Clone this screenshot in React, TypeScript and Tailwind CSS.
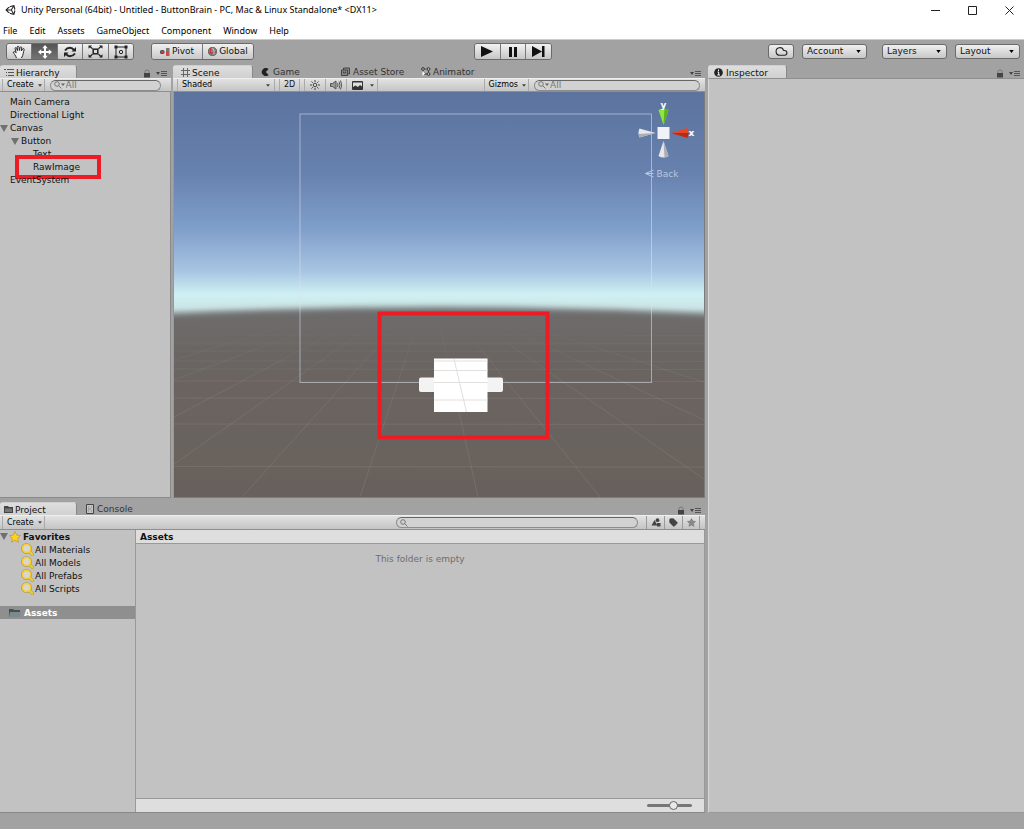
import React from 'react';
import { Cloud, Tag } from 'lucide-react';
import { FaUnity } from 'react-icons/fa';

const MENUS = ['File', 'Edit', 'Assets', 'GameObject', 'Component', 'Window', 'Help'];
const FAVORITES = ['All Materials', 'All Models', 'All Prefabs', 'All Scripts'];

function Caret({ className = 'h-[3px] w-[5px] text-[#444]' }: { className?: string }) {
  return (
    <svg viewBox="0 0 6 4" className={`shrink-0 ${className}`} fill="currentColor">
      <path d="M0 0H6L3 4Z" />
    </svg>
  );
}

function StarShape({ className, fill, stroke }: { className: string; fill: string; stroke: string }) {
  return (
    <svg viewBox="0 0 12 12" className={`shrink-0 ${className}`} fill={fill} stroke={stroke} strokeWidth=".7" strokeLinejoin="round">
      <path d="M6 .6L7.700 4.100L11.500 4.600L8.700 7.300L9.400 11.200L6 9.300L2.600 11.200L3.300 7.300L.5 4.600L4.300 4.100Z" />
    </svg>
  );
}

function PaneMenu({ lock = true }: { lock?: boolean }) {
  return (
    <div className="ml-auto flex items-center gap-[5px] pr-[3px] pt-1 text-[#444]">
      {lock && (
        <button aria-label="Lock pane">
          <svg viewBox="0 0 8 9" className="h-[9px] w-2">
            <path d="M2 4V2.500Q2 1 4 1T6 2.500V4" fill="none" stroke="#777" />
            <rect x="1" y="4" width="6" height="4.500" fill="#444" />
          </svg>
        </button>
      )}
      <button aria-label="Pane options">
        <svg viewBox="0 0 12 7" className="h-[7px] w-3">
          <path d="M0 2H4L2 5Z" fill="#444" />
          <path d="M5 1.500H11M5 3.500H11M5 5.500H11" stroke="#555" />
        </svg>
      </button>
    </div>
  );
}

function Tab({ label, icon, active, className = '' }: { label: string; icon: React.ReactNode; active?: boolean; className?: string }) {
  return (
    <button
      className={`flex h-[13px] items-center gap-0.5 whitespace-nowrap text-[9px] leading-[13px] ${
        active ? 'rounded-t-[3px] border-t border-r border-[#cfcfcf] border-r-[#888] bg-[#d2d2d2] bg-linear-to-b from-[#dedede] to-[#d0d0d0] text-[#111]' : 'text-[#333]'
      } ${className}`}
    >
      {icon}
      <span className="pt-0.5">{label}</span>
    </button>
  );
}

function ToolButton({ label, active, children }: { label: string; active?: boolean; children: React.ReactNode }) {
  return (
    <button
      aria-label={label}
      className={`flex h-full flex-1 items-center justify-center border-r border-[#777] last:border-r-0 ${
        active ? 'bg-linear-to-b from-[#555] to-[#737373]' : 'bg-linear-to-b from-[#f2f2f2] to-[#c6c6c6]'
      }`}
    >
      {children}
    </button>
  );
}

const groupClass = 'flex h-[17px] overflow-hidden rounded-[3px] border border-[#6a6a6a]';

function DropDown({ label }: { label: string }) {
  return (
    <label className="relative flex items-center">
      <select
        aria-label={label}
        className="h-[15px] w-[65px] appearance-none rounded-[3px] border border-[#6a6a6a] bg-linear-to-b from-[#f0f0f0] to-[#c8c8c8] pl-1 text-[9px] leading-[13px] text-[#111]"
      >
        <option>{label}</option>
      </select>
      <span className="pointer-events-none absolute right-1.5">
        <Caret className="h-[3px] w-[5px] text-black" />
      </span>
    </label>
  );
}

function Search({ label, value, className }: { label: string; value?: string; className: string }) {
  return (
    <div className={`flex h-[11px] items-center overflow-hidden rounded-full border border-[#8c8c8c] border-t-[#666] bg-[#d2d2d2] pl-[3px] ${className}`}>
      <svg viewBox="0 0 12 8" className="h-2 w-3 shrink-0" fill="none" stroke="#777">
        <circle cx="3" cy="3" r="2.300" />
        <path d="M4.700 4.700L7.500 7.500" />
        {value && <path d="M7 2.500H11L9 5Z" fill="#666" stroke="none" />}
      </svg>
      <input aria-label={label} placeholder={value} className="h-[9px] w-full min-w-0 bg-transparent text-[9px] leading-[9px] outline-none placeholder:text-[#777]" />
    </div>
  );
}

function CreateButton() {
  return (
    <button className="ml-0.5 flex h-full items-center gap-1 border-x border-[#aaa] pr-0.5 pl-1 text-[8px] text-black">
      Create
      <Caret className="h-[3px] w-1 text-[#444]" />
    </button>
  );
}

const paneBar = 'flex shrink-0 items-center border-y border-t-[#efefef] border-b-[#8f8f8f] bg-linear-to-b from-[#e2e2e2] to-[#c4c4c4]';

function Foldout() {
  return (
    <svg viewBox="0 0 8 7" className="h-[7px] w-2 shrink-0">
      <path d="M0 0H8L4 7Z" fill="#707070" />
    </svg>
  );
}

function MainToolbar() {
  return (
    <div className="grid h-[26px] shrink-0 grid-cols-[1fr_auto_1fr] items-center border-t border-[#ccc] bg-[#a2a2a2] pr-1 pb-0.5 pl-1.5 text-[9px]">
      <div className="flex items-center gap-[17px]">
        <div className={`${groupClass} w-32`}>
          <ToolButton label="Hand">
            <svg viewBox="0 0 16 16" className="h-3.5 w-3.5" fill="#f4f4f4" stroke="#222" strokeWidth="1.100" strokeLinejoin="round" strokeLinecap="round">
              <path d="M5 14.500C4.500 12 1.500 9.500 1.500 8.200C2 7 3.500 7.500 4.800 9L3.500 4.200C3.300 2.800 5 2.500 5.400 3.800L6.200 6.500L6 2.500C6 1 7.800 1 8 2.500L8.400 6.300L9.300 2.800C9.800 1.500 11.300 2 11.100 3.400L10.600 6.800L12.300 4.500C13.200 3.500 14.300 4.300 13.800 5.500C13 8 13 11.500 11 14.500" />
            </svg>
          </ToolButton>
          <ToolButton label="Move" active>
            <svg viewBox="0 0 14 14" className="h-3.5 w-3.5" fill="#fff">
              <path d="M7 0L9.700 3.200H8V6H10.800V4.300L14 7L10.800 9.700V8H8V10.800H9.700L7 14L4.300 10.800H6V8H3.200V9.700L0 7L3.200 4.300V6H6V3.200H4.300Z" />
            </svg>
          </ToolButton>
          <ToolButton label="Rotate">
            <svg viewBox="0 0 14 12" className="h-3 w-3.5" fill="none" stroke="#222" strokeWidth="1.900">
              <path d="M2 4.500Q4 1.800 7 1.800Q9.500 1.800 11 4M12 7.500Q10 10.200 7 10.200Q4.500 10.200 3 8" />
              <path d="M13 1V5.500H8.500ZM1 11V6.500H5.500Z" fill="#222" stroke="none" />
            </svg>
          </ToolButton>
          <ToolButton label="Scale">
            <svg viewBox="0 0 15 13" className="h-[13px] w-[15px]" fill="none" stroke="#222" strokeWidth="1.500">
              <rect x="5.200" y="4.200" width="4.600" height="4.600" />
              <path d="M2 1.500L4.500 3.700M13 1.500L10.500 3.700M2 11.500L4.500 9.300M13 11.500L10.500 9.300" strokeWidth="1.200" />
              <path d="M.5 .5H4L.5 3.800ZM14.500 .5V3.800L11 .5ZM.5 12.500V9.200L4 12.500ZM14.500 12.500H11L14.500 9.200Z" fill="#222" stroke="none" />
            </svg>
          </ToolButton>
          <ToolButton label="Rect">
            <svg viewBox="0 0 14 14" className="h-3.5 w-3.5" fill="none" stroke="#222">
              <path d="M2 2H12V12H2Z" />
              <circle cx="7" cy="7" r="1.700" />
              <path d="M.5 .5H3.500V3.500H.5ZM10.500 .5H13.500V3.500H10.500ZM.5 10.500H3.500V13.500H.5ZM10.500 10.500H13.500V13.500H10.500Z" fill="#222" stroke="none" />
            </svg>
          </ToolButton>
        </div>
        <div className={`${groupClass} h-[15px] w-[103px]`}>
          <button className="flex flex-1 items-center justify-center gap-0.5 border-r border-[#777] bg-linear-to-b from-[#f0f0f0] to-[#c8c8c8]">
            <svg viewBox="0 0 10 8" className="h-2 w-2.5">
              <rect x="0" y="2" width="4.500" height="4" rx="1.500" fill="#555" />
              <rect x="1.500" y="3" width="2" height="2" fill="#e33" />
              <rect x="6" y="0" width="3.500" height="8" fill="#777" />
              <rect x="6" y="3" width="2.500" height="4" fill="#e04040" />
            </svg>
            Pivot
          </button>
          <button className="flex flex-1 items-center justify-center gap-0.5 bg-linear-to-b from-[#f0f0f0] to-[#c8c8c8]">
            <svg viewBox="0 0 10 10" className="h-[9px] w-[9px] shrink-0">
              <circle cx="5" cy="5" r="4.500" fill="#888" stroke="#555" />
              <path d="M3 1Q2 5 4 8M1 6Q5 8 9 5" stroke="#c33" fill="none" strokeWidth="1.300" />
              <path d="M5 1Q8 4 6.500 8" stroke="#ccc" fill="none" />
            </svg>
            Global
          </button>
        </div>
      </div>
      <div className={`${groupClass} w-[78px]`}>
        <ToolButton label="Play">
          <svg viewBox="0 0 12 11" className="h-[11px] w-3"><path d="M0 0L12 5.500L0 11Z" fill="#111" /></svg>
        </ToolButton>
        <ToolButton label="Pause">
          <svg viewBox="0 0 8 10" className="h-2.5 w-2"><path d="M0 0H3V10H0ZM5 0H8V10H5Z" fill="#111" /></svg>
        </ToolButton>
        <ToolButton label="Step">
          <svg viewBox="0 0 13 11" className="h-[11px] w-[13px]"><path d="M0 0L10 5.500L0 11ZM10 0H12.500V11H10Z" fill="#111" /></svg>
        </ToolButton>
      </div>
      <div className="flex justify-end gap-[15px]">
        <div className="flex gap-2">
          <button aria-label="Cloud services" className="flex h-[15px] w-[26px] items-center justify-center rounded-[3px] border border-[#6a6a6a] bg-linear-to-b from-[#f0f0f0] to-[#c8c8c8]">
            <Cloud className="h-[13px] w-[13px]" color="#222" />
          </button>
          <DropDown label="Account" />
        </div>
        <div className="flex gap-2">
          <DropDown label="Layers" />
          <DropDown label="Layout" />
        </div>
      </div>
    </div>
  );
}

function TreeRow({ label, indent, open, marked }: { label: string; indent: string; open?: boolean; marked?: boolean }) {
  return (
    <li className={`relative flex h-[13px] items-center ${indent}`}>
      <span className="flex w-[10px] shrink-0">{open && <Foldout />}</span>
      {label}
      {marked && <span className="absolute -top-1.5 left-[15px] h-6 w-[86px] border-4 border-[#ed1c24]" />}
    </li>
  );
}

function Hierarchy() {
  return (
    <section className="flex w-[171px] shrink-0 flex-col">
      <div className="flex h-[13px]">
        <Tab
          active
          label="Hierarchy"
          className="w-[77px] pl-1"
          icon={
            <svg viewBox="0 0 10 8" className="h-2 w-2.5" stroke="#555" fill="none">
              <path d="M0 1.500H2M3 1.500H10M2 4.500H3M4 4.500H10M2 7.500H3M4 7.500H10" />
            </svg>
          }
        />
        <PaneMenu />
      </div>
      <div className={`${paneBar} h-[14px]`}>
        <CreateButton />
        <Search label="Search hierarchy" value="All" className="mr-2.5 ml-[5px] flex-1" />
      </div>
      <ul className="flex-1 border-r border-b border-[#8a8a8a] bg-[#c2c2c2] pt-1 text-[9px] leading-[13px] text-[#111]">
        <TreeRow label="Main Camera" indent="pl-0" />
        <TreeRow label="Directional Light" indent="pl-0" />
        <TreeRow label="Canvas" indent="pl-0" open />
        <TreeRow label="Button" indent="pl-[11px]" open />
        <TreeRow label="Text" indent="pl-[23px]" />
        <TreeRow label="RawImage" indent="pl-[23px]" marked />
        <TreeRow label="EventSystem" indent="pl-0" />
      </ul>
    </section>
  );
}

function Viewport() {
  return (
    <svg viewBox="0 0 530 405" preserveAspectRatio="xMidYMid slice" className="absolute inset-0 h-full w-full" role="img" aria-label="Scene view">
      <defs>
        <linearGradient id="sky" x1="0" y1="0" x2="0" y2="230" gradientUnits="userSpaceOnUse">
          <stop offset="0" stopColor="#5b739d" />
          <stop offset=".35" stopColor="#6781ae" />
          <stop offset=".6" stopColor="#819fcb" />
          <stop offset=".78" stopColor="#a8c5e2" />
          <stop offset=".88" stopColor="#cff0f2" />
          <stop offset=".94" stopColor="#cbe5e6" />
          <stop offset="1" stopColor="#9eb0b0" />
        </linearGradient>
        <linearGradient id="ground" x1="0" y1="215" x2="0" y2="405" gradientUnits="userSpaceOnUse">
          <stop offset="0" stopColor="#6e6d6e" />
          <stop offset=".25" stopColor="#6b6562" />
          <stop offset="1" stopColor="#68615b" />
        </linearGradient>
        <linearGradient id="gridFade" x1="0" y1="225" x2="0" y2="405" gradientUnits="userSpaceOnUse">
          <stop offset="0" stopColor="#fff" stopOpacity="0" />
          <stop offset=".4" stopColor="#fff" stopOpacity=".07" />
          <stop offset="1" stopColor="#fff" stopOpacity=".08" />
        </linearGradient>
        <filter id="haze" x="-10%" y="-20%" width="120%" height="140%">
          <feGaussianBlur stdDeviation="0 3" />
        </filter>
      </defs>
      <rect width="530" height="405" fill="url(#sky)" />
      <path d="M-40 224Q265 206 570 224V450H-40Z" fill="url(#ground)" filter="url(#haze)" />
      <g stroke="url(#gridFade)" fill="none">
        <path d="M266 235L304 405M289 235L426 405M310 235L530 387M325 232L530 328M335 228L530 290M242 235L186 405M215 242L68 405M195 235L0 372M180 230L0 325M165 226L0 288M150 222L0 268" />
        <path d="M0 374.500L530 375M0 332L530 332.500M0 306L530 306.500M0 289L530 289.500M0 277L530 277.500M0 269L530 269.500M0 259L530 259.500M0 251L530 251.500M0 243L530 243.500" />
      </g>
      <rect x="126" y="22" width="351.500" height="268.500" fill="none" stroke="#d8e3ee" strokeOpacity=".55" />
      <rect x="245" y="285.500" width="84" height="14.500" rx="2" fill="#f3f3f3" />
      <rect x="260" y="266.500" width="53.500" height="53.500" fill="#fff" />
      <path d="M260 269H313.500M260 278.500H313.500M260 290.500H313.500M260 308H313.500M280 267L292.500 320" stroke="#e2e0de" fill="none" />
      <rect x="205.500" y="221.500" width="168" height="124" fill="none" stroke="#ed1c24" strokeWidth="4" />
      <g transform="translate(489.500 41)">
        <path d="M-5 -23Q0 -26 5 -23L0 -8Z" fill="#8be83a" />
        <path d="M1 -24.500Q4 -24 5 -23L0 -8Z" fill="#5fae27" />
        <path d="M-24 -4.500Q-26 0 -24 4.500L-8 0Z" fill="#e7e7e9" />
        <path d="M-25 1L-24 4.500L-8 0Z" fill="#a9adb5" />
        <path d="M-5 23Q0 26 5 23L0 8Z" fill="#e7e7e9" />
        <path d="M1 24.500L5 23L0 8Z" fill="#a9adb5" />
        <path d="M24 -5Q26 0 24 5L8 0Z" fill="#ef4423" />
        <path d="M25 0L24 5L8 0Z" fill="#b52c17" />
        <rect x="-6" y="-6" width="12" height="12" fill="#f0f2f7" />
        <text x="0" y="-25" textAnchor="middle" fontSize="9" fontWeight="bold" fill="#fff">y</text>
        <text x="28" y="3" textAnchor="middle" fontSize="9" fontWeight="bold" fill="#fff">x</text>
        <path d="M-10 37L-18 40.500L-10 44M-18 40.500H-10" stroke="#b9c8df" fill="none" />
        <text x="-7" y="44" fontSize="9" fill="#b9c8df">Back</text>
      </g>
    </svg>
  );
}

function Scene() {
  return (
    <section className="flex min-w-0 flex-1 flex-col">
      <div className="flex h-[13px]">
        <Tab
          active
          label="Scene"
          className="w-20 pl-2"
          icon={<svg viewBox="0 0 9 9" className="h-[9px] w-[9px]" stroke="#666" fill="none"><path d="M2.500 0V9M6.500 0V9M0 2.500H9M0 6.500H9" /></svg>}
        />
        <Tab
          label="Game"
          className="w-20 pl-2"
          icon={<svg viewBox="0 0 9 9" className="mr-0.5 h-2 w-2" fill="#222"><path d="M8.500 1.200A4.500 4.500 0 1 0 8.500 7.800L5.500 4.500Z" /></svg>}
        />
        <Tab
          label="Asset Store"
          className="w-20 pl-2"
          icon={<svg viewBox="0 0 9 9" className="mr-px h-[9px] w-[9px]" fill="#888" stroke="#444"><path d="M2.500 3V1H8.500V7H7M.5 3H6.500V8.500H.5Z" /><path d="M2.500 4.500V6H4.500V4.500" fill="none" /></svg>}
        />
        <Tab
          label="Animator"
          className="pl-2"
          icon={<svg viewBox="0 0 10 9" className="h-[9px] w-2.5" fill="#bbb" stroke="#333"><circle cx="2" cy="2" r="1.400" /><circle cx="7.500" cy="2" r="1.400" /><circle cx="7.500" cy="7" r="1.400" /><path d="M2.500 7H6M4.500 2H5.500M7.500 4V5" fill="none" /><path d="M1.500 4.500V9L4 6.500Z" fill="#fff" stroke="none" /></svg>}
        />
        <PaneMenu lock={false} />
      </div>
      <div className={`${paneBar} h-[14px]`}>
        <label className="relative ml-1 flex h-full items-center border-x border-[#aaa]">
          <select aria-label="Shading mode" className="w-24 appearance-none pl-1 text-[8px] leading-3 text-black">
            <option>Shaded</option>
          </select>
          <span className="pointer-events-none absolute right-1"><Caret className="h-[3px] w-1 text-[#444]" /></span>
        </label>
        <button className="ml-1 h-full w-[21px] border-x border-[#aaa] text-[8px]">2D</button>
        <button aria-label="Lighting" className="ml-1 flex h-full w-[22px] items-center justify-center border-x border-[#aaa]">
          <svg viewBox="0 0 10 10" className="h-2.5 w-2.5" fill="none" stroke="#444"><circle cx="5" cy="5" r="1.800" /><path d="M5 0V2M5 8V10M0 5H2M8 5H10M1.500 1.500L2.800 2.800M7.200 7.200L8.500 8.500M8.500 1.500L7.200 2.800M1.500 8.500L2.800 7.200" /></svg>
        </button>
        <button aria-label="Audio" className="flex h-full w-[21px] items-center justify-center border-r border-[#aaa]">
          <svg viewBox="0 0 12 10" className="h-2.5 w-3" fill="none" stroke="#555"><path d="M.5 3.500H2.500L6 1V9L2.500 6.500H.5Z" fill="#999" /><path d="M7.500 3Q8.500 5 7.500 7M9 1.500Q11 5 9 8.500M10.500 .5Q13 5 10.500 9.500" /></svg>
        </button>
        <button aria-label="Effects" className="flex h-full w-5 items-center justify-center">
          <svg viewBox="0 0 11 9" className="h-[9px] w-[11px]"><rect width="11" height="9" rx="1" fill="#333" /><path d="M1 1.500H10V5.500L8 4L6 6L3.500 4.500L1 6Z" fill="#ddd" /></svg>
        </button>
        <button aria-label="Effects options" className="flex h-full w-[11px] items-center justify-center border-r border-[#aaa]">
          <Caret className="h-[3px] w-1 text-[#444]" />
        </button>
        <button className="ml-auto flex h-full items-center gap-1 border-x border-[#aaa] pr-0.5 pl-1 text-[8px] text-black">
          Gizmos
          <Caret className="h-[3px] w-1 text-[#444]" />
        </button>
        <Search label="Search scene" value="All" className="mr-[5px] ml-[5px] w-[166px]" />
      </div>
      <div className="relative flex-1 overflow-hidden border-r border-b border-l border-[#7c7c7c] border-l-[#999] bg-[#68615b]">
        <Viewport />
      </div>
    </section>
  );
}

function FavoriteIcon() {
  return (
    <svg viewBox="0 0 13 13" className="h-[13px] w-[13px] shrink-0" fill="none" strokeLinecap="round">
      <circle cx="5.500" cy="5.500" r="4" stroke="#a8903c" strokeWidth="2.600" />
      <path d="M9 9L11.500 11.500" stroke="#a8903c" strokeWidth="2.800" />
      <circle cx="5.500" cy="5.500" r="4" fill="#d8d6cd" stroke="#f7d030" strokeWidth="1.600" />
      <path d="M9 9L11.500 11.500" stroke="#f7d030" strokeWidth="1.800" />
    </svg>
  );
}

function Project() {
  return (
    <section className="flex h-[311px] shrink-0 flex-col">
      <div className="flex h-[13px]">
        <Tab
          active
          label="Project"
          className="w-[77px] pl-1"
          icon={<svg viewBox="0 0 9 8" className="h-2 w-[9px]"><path d="M0 1H4L5 2H9V8H0Z" fill="#444" /><path d="M1 3.500H8V7H1Z" fill="#777" /></svg>}
        />
        <Tab
          label="Console"
          className="pl-[9px]"
          icon={<svg viewBox="0 0 8 10" className="mr-px h-2.5 w-2" stroke="#444"><path d="M.5 .5H7.500V9.500H.5Z" fill="#c4c4c4" /><path d="M2 3H3M5 3H6M2 5H5M2 7H3M5 7H6" stroke="#888" /></svg>}
        />
        <PaneMenu />
      </div>
      <div className={`${paneBar} h-[15px]`}>
        <CreateButton />
        <Search label="Search project" className="mr-2 ml-auto w-[242px]" />
        <button aria-label="Filter by type" className="flex h-full w-[18px] items-center justify-center border-l border-[#999]">
          <svg viewBox="0 0 10 9" className="h-[9px] w-2.5" fill="#444"><path d="M3.500 2L6.500 7.500H.5ZM6 5H9.500V8.500H6Z" /><circle cx="6.500" cy="2.200" r="1.900" /></svg>
        </button>
        <button aria-label="Filter by label" className="flex h-full w-[18px] items-center justify-center border-l border-[#999]">
          <Tag className="h-[9px] w-[9px]" fill="#444" color="#444" />
        </button>
        <button aria-label="Save search" className="mr-[5px] flex h-full w-[18px] items-center justify-center border-x border-[#999]">
          <StarShape className="h-[9px] w-[9px]" fill="#888" stroke="#777" />
        </button>
      </div>
      <div className="flex min-h-0 flex-1 border-b border-[#888]">
        <nav className="w-[136px] shrink-0 border-r border-[#999] bg-[#c2c2c2] text-[9px] leading-[13px] text-[#111]">
          <div className="flex h-[13px] items-center font-bold">
            <Foldout />
            <StarShape className="ml-px h-3 w-3" fill="#ffd21f" stroke="#b8952a" />
            <span className="pt-0.5 pl-0.5">Favorites</span>
          </div>
          <ul>
            {FAVORITES.map((name) => (
              <li key={name} className="flex h-[13px] items-center gap-px pl-[21px]">
                <FavoriteIcon />
                <span className="pt-0.5">{name}</span>
              </li>
            ))}
          </ul>
          <div className="mt-[11px] flex h-[13px] items-center gap-[3px] bg-[#8f8f8f] pl-[9px] font-bold text-white">
            <svg viewBox="0 0 12 9" className="h-[9px] w-3"><path d="M0 1H4L5 2H11V9H0Z" fill="#455052" /><path d="M1 4H12L11 9H0Z" fill="#7d898c" /></svg>
            <span className="pt-0.5">Assets</span>
          </div>
        </nav>
        <div className="flex min-w-0 flex-1 flex-col border-r border-[#999] bg-[#c2c2c2]">
          <h2 className="h-[14px] border-b border-[#999] bg-[#dedede] pt-px pl-1 text-[9px] leading-[13px] font-bold text-[#111]">Assets</h2>
          <p className="flex-1 pt-[9px] text-center text-[9px] leading-[13px] text-[#6e6e6e]">This folder is empty</p>
          <div className="flex h-[14px] items-center justify-end border-t border-[#999] bg-[#dedede] pr-3">
            <input
              type="range"
              aria-label="Icon size"
              defaultValue={60}
              className="h-[9px] w-[45px] appearance-none bg-transparent [&::-webkit-slider-runnable-track]:h-[3px] [&::-webkit-slider-runnable-track]:rounded-full [&::-webkit-slider-runnable-track]:bg-[#777] [&::-webkit-slider-thumb]:-mt-[3px] [&::-webkit-slider-thumb]:h-[9px] [&::-webkit-slider-thumb]:w-[9px] [&::-webkit-slider-thumb]:appearance-none [&::-webkit-slider-thumb]:rounded-full [&::-webkit-slider-thumb]:border [&::-webkit-slider-thumb]:border-[#666] [&::-webkit-slider-thumb]:bg-[#e8e8e8]"
            />
          </div>
        </div>
      </div>
    </section>
  );
}

function Inspector() {
  return (
    <aside className="flex w-[316px] shrink-0 flex-col">
      <div className="flex h-[13px]">
        <Tab
          active
          label="Inspector"
          className="w-[79px] pl-1.5"
          icon={<svg viewBox="0 0 9 9" className="mr-px h-[9px] w-[9px]"><circle cx="4.500" cy="4.500" r="4.300" fill="#222" /><path d="M4.500 1.500V3M3.500 4H4.700V7M3.300 7H6" stroke="#fff" fill="none" /></svg>}
        />
        <PaneMenu />
      </div>
      <div className="flex-1 border-y border-l border-[#999] border-t-[#8f8f8f] border-l-[#d6d6d6] bg-[#c2c2c2]" />
    </aside>
  );
}

export default function App() {
  return (
    <div className="flex h-screen flex-col overflow-hidden bg-[#a2a2a2] font-['DejaVu_Sans',sans-serif] text-[#111]">
      <header className="shrink-0 bg-white font-['Noto_Sans',sans-serif] text-black">
        <div className="flex h-5 items-center gap-1 pl-[5px]">
          <FaUnity className="h-3 w-3 shrink-0" color="#222" />
          <h1 className="text-[9px] leading-5 whitespace-nowrap">Unity Personal (64bit) - Untitled - ButtonBrain - PC, Mac &amp; Linux Standalone* &lt;DX11&gt;</h1>
          <div className="ml-auto flex items-center gap-7 pr-2.5">
            <button aria-label="Minimize"><svg viewBox="0 0 9 9" className="h-[9px] w-[9px]" stroke="#222"><path d="M0 4.500H9" /></svg></button>
            <button aria-label="Maximize"><svg viewBox="0 0 9 9" className="h-[9px] w-[9px]" stroke="#222" fill="none"><path d="M.5 .5H8.500V8.500H.5Z" /></svg></button>
            <button aria-label="Close"><svg viewBox="0 0 9 9" className="h-[9px] w-[9px]" stroke="#222"><path d="M.5 .5L8.500 8.500M8.500 .5L.5 8.500" /></svg></button>
          </div>
        </div>
        <nav className="flex h-[19px] gap-3 pt-px pl-[3px] text-[9px] leading-5">
          {MENUS.map((menu) => (
            <button key={menu}>{menu}</button>
          ))}
        </nav>
      </header>
      <MainToolbar />
      <main className="flex min-h-0 flex-1 gap-[3px]">
        <div className="flex min-w-0 flex-1 flex-col gap-1">
          <div className="flex min-h-0 flex-1 gap-0.5">
            <Hierarchy />
            <Scene />
          </div>
          <Project />
        </div>
        <Inspector />
      </main>
      <footer className="h-4 shrink-0 bg-[#a2a2a2]" />
    </div>
  );
}
